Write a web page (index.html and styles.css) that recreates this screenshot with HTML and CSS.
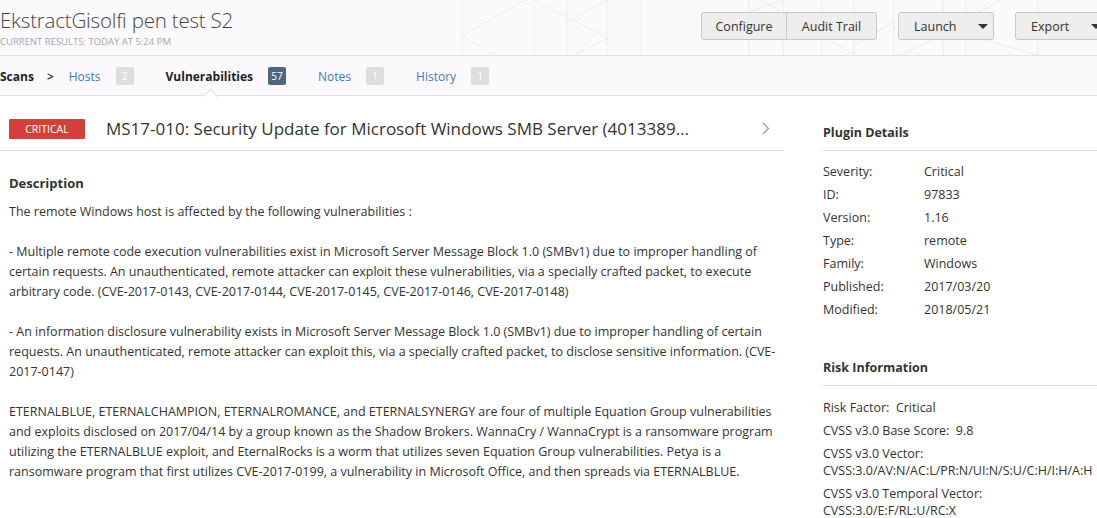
FILE: index.html
```html
<!DOCTYPE html>
<html lang="en">
<head>
<meta charset="utf-8">
<title>EkstractGisolfi pen test S2</title>
<link rel="stylesheet" href="styles.css">
</head>
<body>
<div class="page">
  <header class="top">
    <svg class="pattern" width="657" height="55" viewBox="0 0 657 55" aria-hidden="true">
      <g fill="none" stroke-width="1">
        <g stroke="#eeecee">
          <path d="M22 0 V55 M94 0 V55 M127 0 V55 M167 0 V55 M201 0 V55"/>
          <path d="M85 0 L22 36 L55 55 M94 0 L168 38 L135 55 M127 22 L167 0"/>
        </g>
        <g stroke="#e3f0df">
          <path d="M309 0 V55 M343 0 V55 M382 0 V55 M414 0 V55 M454 0 V55 M503 0 V55 M526 0 V55 M598 0 V55"/>
          <path d="M309 12 L343 0 M320 0 L382 35 L415 55 M414 45 L454 22 M460 55 L503 35 M526 20 L560 0 M526 35 L598 55"/>
        </g>
      </g>
    </svg>
    <div class="title-block">
      <h1 class="scan-title">EkstractGisolfi pen test S2</h1>
      <div class="scan-sub">CURRENT RESULTS: TODAY AT 5:24 PM</div>
    </div>
    <div class="actions">
      <div class="btn-group">
        <button class="btn">Configure</button>
        <button class="btn">Audit Trail</button>
      </div>
      <button class="btn btn-drop btn-launch">Launch <span class="caret"></span></button>
      <button class="btn btn-drop btn-export">Export <span class="caret"></span></button>
    </div>
  </header>

  <nav class="tabs">
    <span class="crumb">Scans</span>
    <span class="crumb-sep">&gt;</span>
    <a class="tab">Hosts <span class="badge">2</span></a>
    <a class="tab active">Vulnerabilities <span class="badge badge-dark">57</span></a>
    <a class="tab">Notes <span class="badge">1</span></a>
    <a class="tab">History <span class="badge">1</span></a>
  </nav>

  <main class="content">
    <section class="detail">
      <div class="vuln-head">
        <span class="sev">CRITICAL</span>
        <h2 class="vuln-title">MS17-010: Security Update for Microsoft Windows SMB Server (4013389) (ETERNALBLUE) (ETERNALCHAMPION)</h2>
        <svg class="chev" width="8" height="13" viewBox="0 0 8 13"><path d="M1 1 L6.5 6.5 L1 12" fill="none" stroke="#999" stroke-width="1.2"/></svg>
      </div>
      <div class="desc">
        <h3>Description</h3>
        <p>The remote Windows host is affected by the following vulnerabilities :</p>
        <p>- Multiple remote code execution vulnerabilities exist in Microsoft Server Message Block 1.0 (SMBv1) due to improper handling of certain requests. An unauthenticated, remote attacker can exploit these vulnerabilities, via a specially crafted packet, to execute arbitrary code. (CVE-2017-0143, CVE-2017-0144, CVE-2017-0145, CVE-2017-0146, CVE-2017-0148)</p>
        <p>- An information disclosure vulnerability exists in Microsoft Server Message Block 1.0 (SMBv1) due to improper handling of certain requests. An unauthenticated, remote attacker can exploit this, via a specially crafted packet, to disclose sensitive information. (CVE-2017-0147)</p>
        <p>ETERNALBLUE, ETERNALCHAMPION, ETERNALROMANCE, and ETERNALSYNERGY are four of multiple Equation Group vulnerabilities and exploits disclosed on 2017/04/14 by a group known as the Shadow Brokers. WannaCry / WannaCrypt is a ransomware program utilizing the ETERNALBLUE exploit, and EternalRocks is a worm that utilizes seven Equation Group vulnerabilities. Petya is a ransomware program that first utilizes CVE-2017-0199, a vulnerability in Microsoft Office, and then spreads via ETERNALBLUE.</p>
      </div>
    </section>

    <aside class="side">
      <h3 class="side-head">Plugin Details</h3>
      <dl class="kv">
        <dt>Severity:</dt><dd>Critical</dd>
        <dt>ID:</dt><dd>97833</dd>
        <dt>Version:</dt><dd>1.16</dd>
        <dt>Type:</dt><dd>remote</dd>
        <dt>Family:</dt><dd>Windows</dd>
        <dt>Published:</dt><dd>2017/03/20</dd>
        <dt>Modified:</dt><dd>2018/05/21</dd>
      </dl>
      <h3 class="side-head">Risk Information</h3>
      <ul class="risk">
        <li>Risk Factor:&nbsp; Critical</li>
        <li>CVSS v3.0 Base Score:&nbsp; 9.8</li>
        <li>CVSS v3.0 Vector:<br>CVSS:3.0/AV:N/AC:L/PR:N/UI:N/S:U/C:H/I:H/A:H</li>
        <li>CVSS v3.0 Temporal Vector:<br>CVSS:3.0/E:F/RL:U/RC:X</li>
      </ul>
    </aside>
  </main>
</div>
</body>
</html>
```

FILE: styles.css
```css
* { box-sizing: border-box; }
html, body { margin: 0; padding: 0; }
body {
  font-family: "Open Sans", "Noto Sans", "Liberation Sans", sans-serif;
  font-size: 12px;
  color: #333;
  background: #fff;
  overflow: hidden;
}
.page { width: 1097px; height: 518px; overflow: hidden; }

.top {
  position: relative;
  height: 56px;
  background: #fcf9fc;
  border-bottom: 1px solid #e2e0e2;
  display: flex;
  justify-content: space-between;
  align-items: flex-start;
}
.pattern { position: absolute; left: 440px; top: 0; }
.title-block { position: relative; padding-top: 6px; }
.scan-title {
  margin: 0;
  font-size: 20.5px;
  font-weight: 300;
  color: #444;
  line-height: 28px;
  letter-spacing: -0.2px;
}
.scan-sub {
  font-size: 9.5px;
  color: #a8a8a8;
  line-height: 12px;
  margin-top: 2px;
}
.actions {
  position: relative;
  display: flex;
  gap: 21px;
  padding-top: 12px;
  margin-right: -10px;
}
.btn-group { display: flex; }
.btn {
  font-family: inherit;
  font-size: 12.5px;
  color: #333;
  background: #eeeeee;
  border: 1px solid #c8c8c8;
  border-radius: 3px;
  height: 28px;
  padding: 0 12px;
  display: flex;
  align-items: center;
  justify-content: center;
}
.btn-group .btn:first-child { width: 86px; border-radius: 3px 0 0 3px; }
.btn-group .btn:last-child { width: 91px; border-left: 1px solid #c8c8c8; border-radius: 0 3px 3px 0; margin-left: -1px; }
.btn-launch { width: 96px; justify-content: flex-start; padding-left: 15px; gap: 22px; }
.btn-export { width: 92px; justify-content: flex-start; padding-left: 15px; gap: 22px; }
.caret {
  width: 0; height: 0;
  border-left: 5px solid transparent;
  border-right: 5px solid transparent;
  border-top: 5px solid #333;
}

.tabs {
  position: relative;
  height: 40px;
  padding-top: 1px;
  background: #fcf9fc;
  border-bottom: 1px solid #e2e0e2;
  display: flex;
  align-items: center;
  font-size: 12px;
}
.crumb { font-weight: 700; color: #222; }
.crumb-sep { margin-left: 13px; margin-right: 15px; color: #444; font-weight: 700; font-size: 12px; }
.tab {
  position: relative;
  color: #3a7bbf;
  display: flex;
  align-items: center;
  margin-right: 32px;
  height: 39px;
}
.tab.active { color: #222; font-weight: 700; }
.tab.active::after {
  content: "";
  position: absolute;
  left: 39px;
  bottom: -1px;
  width: 10px;
  height: 10px;
  background: #fff;
  border-left: 1px solid #e2e0e2;
  border-top: 1px solid #e2e0e2;
  transform: translateY(5px) rotate(45deg);
}
.badge {
  display: inline-flex;
  align-items: center;
  justify-content: center;
  min-width: 18px;
  height: 18px;
  padding: 0 3px;
  margin-left: 15px;
  border-radius: 2px;
  background: #dedede;
  color: #fff;
  font-size: 10px;
  font-weight: 400;
}
.badge-dark { background: #4e6780; }

.content {
  display: grid;
  grid-template-columns: 784px 274px;
  column-gap: 39px;
}
.vuln-head {
  height: 55px;
  padding-top: 11px;
  border-bottom: 1px solid #dcdcdc;
  display: flex;
  align-items: center;
  padding-left: 9px;
  padding-right: 14px;
}
.sev {
  flex: none;
  width: 76px;
  height: 20px;
  background: #d43f3a;
  color: #fff;
  font-size: 10.5px;
  display: flex;
  align-items: center;
  justify-content: center;
  border-radius: 1px;
}
.vuln-title {
  margin: 0 0 0 21px;
  font-size: 17px;
  font-weight: 400;
  color: #333;
  white-space: nowrap;
  overflow: hidden;
  text-overflow: ellipsis;
  width: 585px;
  line-height: 26px;
}
.chev { margin-left: auto; }

.desc { padding: 22px 0 0 9px; }
.desc h3 {
  margin: 0 0 9px 0;
  font-size: 13px;
  font-weight: 700;
  color: #333;
  line-height: 20px;
}
.desc p {
  margin: 0 0 20px 0;
  line-height: 20px;
  font-size: 12.5px;
  color: #333;
}

.side { font-size: 12.5px; }
.side-head {
  margin: 0;
  height: 55px;
  display: flex;
  align-items: flex-end;
  padding-bottom: 9px;
  border-bottom: 1px solid #dcdcdc;
  font-size: 12.5px;
  font-weight: 700;
  color: #333;
}
.kv {
  display: grid;
  grid-template-columns: 101px 1fr;
  row-gap: 6px;
  margin: 12px 0 13px 0;
  line-height: 17px;
}
.kv dt, .kv dd { margin: 0; }
.risk {
  list-style: none;
  margin: 13px 0 0 0;
  padding: 0;
  line-height: 17px;
}
.risk li { margin-bottom: 6px; white-space: nowrap; }
```
